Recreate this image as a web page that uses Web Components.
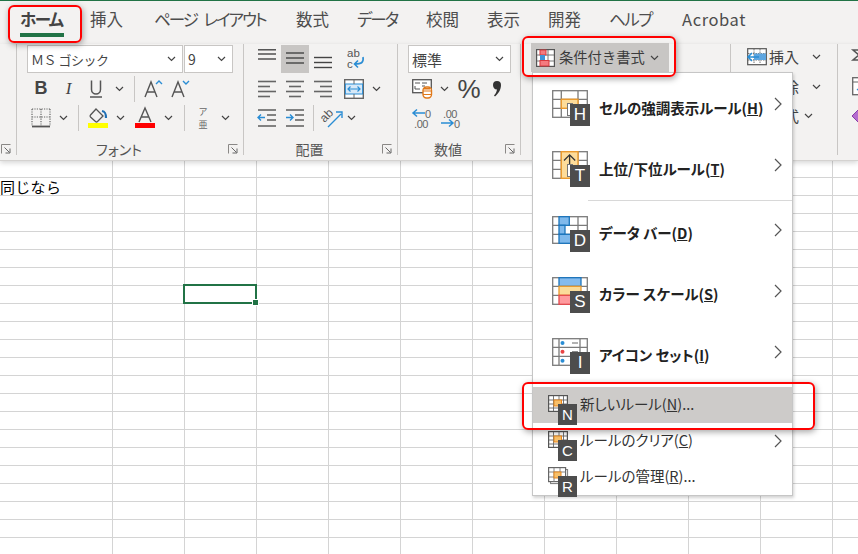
<!DOCTYPE html>
<html lang="ja"><head><meta charset="utf-8"><title>Excel</title>
<style>
html,body{margin:0;padding:0;width:858px;height:554px;overflow:hidden;background:#fff}
body{font-family:"Noto Sans CJK JP","Noto Sans",sans-serif;color:#444;position:relative}
</style></head><body>
<x-tabs>
  <x-tab w="70" active style="letter-spacing:-1.6px">ホーム</x-tab><x-tab w="64">挿入</x-tab><x-tab w="142" style="letter-spacing:-2px;word-spacing:5px">ページ レイアウト</x-tab><x-tab w="61">数式</x-tab><x-tab w="69" style="letter-spacing:-2px">データ</x-tab><x-tab w="61">校閲</x-tab><x-tab w="61">表示</x-tab><x-tab w="61">開発</x-tab><x-tab w="73" style="letter-spacing:-1.5px">ヘルプ</x-tab><x-tab w="80" style="letter-spacing:.6px">Acrobat</x-tab>
</x-tabs>
<x-ribbon>
  <x-group w="17" launcher></x-group>
  <x-group w="227" pad="10" label="フォント" launcher>
    <x-row><x-combo w="156" style="font-size:13px;letter-spacing:-.5px">ＭＳ ゴシック</x-combo><x-combo w="49" style="margin-left:1px">9</x-combo></x-row>
    <x-row>
      <x-tool w="28"><span style="font:700 18px 'Liberation Sans',sans-serif">B</span></x-tool>
      <x-tool w="27"><span style="font:italic 400 17px 'Liberation Serif',serif">I</span></x-tool>
      <x-tool w="28" icon="under"></x-tool><x-tool w="18" icon="chev"></x-tool><x-tool w="12" icon="sep"></x-tool>
      <x-tool w="26" icon="growA"></x-tool><x-tool w="28" icon="shrinkA"></x-tool>
    </x-row>
    <x-row>
      <x-tool w="28" icon="borders"></x-tool><x-tool w="16" icon="chev"></x-tool><x-tool w="14" icon="sep"></x-tool>
      <x-tool w="26" icon="fill"></x-tool><x-tool w="18" icon="chev"></x-tool>
      <x-tool w="32" icon="fontA"></x-tool><x-tool w="14" icon="chev"></x-tool><x-tool w="18" icon="sep"></x-tool>
      <x-tool w="20"><span style="display:flex;flex-direction:column;align-items:center;font-size:9px;line-height:13px;color:#666"><span>ア</span><span>亜</span></span></x-tool><x-tool w="24" icon="chev"></x-tool>
    </x-row>
  </x-group>
  <x-group w="154" pad="9" label="配置" launcher>
    <x-row><x-tool w="28" icon="vtop"></x-tool><x-tool w="28" icon="vmid" on></x-tool><x-tool w="28" icon="vbot"></x-tool><x-tool w="4"></x-tool><x-tool w="28" icon="wrap"></x-tool></x-row>
    <x-row><x-tool w="28" icon="hleft"></x-tool><x-tool w="28" icon="hmid"></x-tool><x-tool w="28" icon="hright"></x-tool><x-tool w="4"></x-tool><x-tool w="26" icon="merge"></x-tool><x-tool w="18" icon="chev"></x-tool></x-row>
    <x-row><x-tool w="28" icon="outdent"></x-tool><x-tool w="28" icon="indent"></x-tool><x-tool w="8" icon="sep"></x-tool><x-tool w="30" icon="orient"></x-tool><x-tool w="9" icon="chev"></x-tool></x-row>
  </x-group>
  <x-group w="123" pad="10" label="数値" launcher>
    <x-row><x-combo w="103" style="font-size:15px">標準</x-combo></x-row>
    <x-row><x-tool w="27" icon="money"></x-tool><x-tool w="18" icon="chev"></x-tool><x-tool w="32"><span style="font-size:26px;line-height:28px;color:#444;font-family:'Liberation Sans',sans-serif">%</span></x-tool><x-tool w="24" icon="comma"></x-tool></x-row>
    <x-row><x-tool w="28" icon="decUp"></x-tool><x-tool w="30" icon="decDown"></x-tool></x-row>
  </x-group>
  <x-group w="210" pad="10">
    <x-cf>条件付き書式</x-cf>
  </x-group>
  <x-group w="107" pad="14">
    <x-row style="margin-top:-2px"><x-tool w="24" icon="insert"></x-tool><x-tool w="30"><span style="font-size:15px;margin-top:-1px">挿入</span></x-tool><x-tool w="34" icon="chev"></x-tool></x-row>
    <x-row><x-tool w="24"></x-tool><x-tool w="30"><span style="font-size:15px;margin-top:-1px">削除</span></x-tool><x-tool w="34" icon="chev"></x-tool></x-row>
    <x-row><x-tool w="24"></x-tool><x-tool w="30"><span style="font-size:15px;margin-top:-1px">書式</span></x-tool><x-tool w="18" icon="chev"></x-tool></x-row>
  </x-group>
  <x-group w="30" pad="14" last>
    <x-row style="margin-top:-4px"><x-tool w="16" icon="sigma"></x-tool></x-row>
    <x-row style="margin-top:2px"><x-tool w="16" icon="fillDown"></x-tool></x-row>
    <x-row><x-tool w="16" icon="eraser"></x-tool></x-row>
  </x-group>
</x-ribbon>
<x-sheet></x-sheet>
<x-menu>
  <x-item big type="h" key="H" dy="-1">セルの強調表示ルール(<u>H</u>)</x-item>
  <x-item big type="t" key="T" after dy="1">上位/下位ルール(<u>T</u>)</x-item>
  <x-item big type="d" key="D" dy="-3">データ バー(<u>D</u>)</x-item>
  <x-item big type="s" key="S" dy="-3">カラー スケール(<u>S</u>)</x-item>
  <x-item big type="i" key="I" dy="-3">アイコン セット(<u>I</u>)</x-item>
  <x-item type="n" key="N" hover nochev dy="-3">新しいルール(<u>N</u>)...</x-item>
  <x-item type="c" key="C" dy="-3">ルールのクリア(<u>C</u>)</x-item>
  <x-item type="r" key="R" nochev dy="-3">ルールの管理(<u>R</u>)...</x-item>
</x-menu>
<x-mark style="left:8px;top:5px;width:74px;height:38px"></x-mark>
<x-mark style="left:522px;top:36px;width:154px;height:41px"></x-mark>
<x-mark style="left:522px;top:382px;width:293px;height:48px"></x-mark>
<script>
const ln=(a,s='#555',w=1.4)=>a.map(([x1,y,x2])=>`<path d="M${x1} ${y}H${x2}" stroke="${s}" stroke-width="${w}"/>`).join('');
const svg=(w,h,b)=>`<svg xmlns="http://www.w3.org/2000/svg" width="${w}" height="${h}" viewBox="0 0 ${w} ${h}" fill="none" style="display:block;overflow:visible">${b}</svg>`;
const blue='#2a8dd4';
const ICONS={
 chev:svg(9,6,`<path d="M1 1l3.5 3.5L8 1" stroke="#444" stroke-width="1.2"/>`),
 sep:svg(1,28,`<rect width="1" height="26" y="1" fill="#c8c6c4"/>`),
 under:svg(14,20,`<path d="M2.5 1.5v9a4.5 4.5 0 0 0 9 0v-9" stroke="#555" stroke-width="1.5"/><path d="M1 18h12" stroke="#555" stroke-width="1.5"/>`),
 growA:svg(20,20,`<path d="M2 18L8 3l6 15M4.5 13h7" stroke="#555" stroke-width="1.4"/><path d="M13 5l3-3 3 3" stroke="${blue}" stroke-width="1.4"/>`),
 shrinkA:svg(20,20,`<path d="M2 18L8 3l6 15M4.5 13h7" stroke="#555" stroke-width="1.4"/><path d="M13 2l3 3 3-3" stroke="${blue}" stroke-width="1.4"/>`),
 borders:svg(20,20,`<path d="M1 1h18M1 9h18M1 1v17M10 1v17M19 1v17" stroke="#666" stroke-width="1.2" stroke-dasharray="1.2 1.2"/><path d="M1 18.5h18" stroke="#555" stroke-width="1.8"/>`),
 fill:svg(20,22,`<path d="M8 2l7 7-5.5 5.5a1.5 1.5 0 0 1-2 0L2.5 10a1.5 1.5 0 0 1 0-2z" stroke="#555" stroke-width="1.3"/><path d="M14 4c3 .5 4 2 4 7" stroke="#1f6fb5" stroke-width="2.2"/><rect y="16" width="20" height="5" fill="#ffff00"/>`),
 fontA:svg(20,22,`<path d="M4 15L10 1l6 14M6 10h8" stroke="#555" stroke-width="1.4"/><rect y="16" width="20" height="5" fill="#ff0000"/>`),
 vtop:svg(20,20,ln([[1,.8,19],[1,5,19],[1,10,19]],'#444')),
 vmid:svg(20,20,ln([[1,4,19],[1,9,19],[1,14,19]],'#444')),
 vbot:svg(20,20,ln([[1,8.5,19],[1,13.5,19],[1,18.5,19]],'#444')),
 hleft:svg(20,20,ln([[1,2.5,19],[1,7.5,13],[1,12.5,19],[1,17.5,13]],'#666',1.6)),
 hmid:svg(20,20,ln([[1,2.5,19],[4,7.5,16],[1,12.5,19],[4,17.5,16]],'#666',1.6)),
 hright:svg(20,20,ln([[1,2.5,19],[7,7.5,19],[1,12.5,19],[7,17.5,19]],'#666',1.6)),
 outdent:svg(20,20,ln([[1,2,19],[10,7,19],[10,12,19],[1,18,19]],'#666',1.6)+`<path d="M1 9.5h7M4 6.5l-3 3 3 3" stroke="${blue}" stroke-width="1.4"/>`),
 indent:svg(20,20,ln([[1,2,19],[10,7,19],[10,12,19],[1,18,19]],'#666',1.6)+`<path d="M1 9.5h7M5 6.5l3 3-3 3" stroke="${blue}" stroke-width="1.4"/>`),
 wrap:svg(20,22,`<text x="2" y="9" font-family="Liberation Sans" font-size="11.5" fill="#555">ab</text><text x="2" y="19.5" font-family="Liberation Sans" font-size="11.5" fill="#555">c</text><path d="M18 9c1 6-2 7-8 7M13 12.5L9.5 16l3.5 3.5" stroke="${blue}" stroke-width="1.6"/>`),
 merge:svg(20,20,`<rect x=".7" y=".7" width="18.6" height="18.6" stroke="#666" stroke-width="1.4" fill="#fff"/><rect x="1.4" y="5" width="17.2" height="10" fill="#d7e9f8" stroke="${blue}"/><path d="M10 1v4M10 15v4" stroke="#666"/><path d="M4 10h12M6.5 7.5L4 10l2.5 2.5M13.5 7.5L16 10l-2.5 2.5" stroke="${blue}" stroke-width="1.2"/>`),
 orient:svg(22,20,`<text x="1" y="11" font-family="Liberation Sans" font-size="12" fill="#555" transform="rotate(-45 7 10)">ab</text><path d="M7 19L20 6M15 4h6v6" stroke="${blue}" stroke-width="1.4"/>`),
 money:svg(20,20,`<rect x=".7" y=".7" width="18.6" height="13" stroke="#555" stroke-width="1.3" fill="#fff"/><path d="M3 4h5M3 7v3h5M10 4h5M10 7h3" stroke="#555"/><rect x="11" y="8" width="8.5" height="11" rx="3.5" fill="#fff" stroke="#e0791a" stroke-width="1.4"/><path d="M11 12h8.5M11 15.5h8.5" stroke="#e0791a" stroke-width="1.2"/><path d="M12 9.7h6" stroke="#e0791a" stroke-width="1.6"/>`),
 comma:svg(10,18,`<path d="M1 5a4 4 0 1 1 8 0c0 5-3 9-6 11.5l-1-1c1.5-1.5 2.6-3.5 3-6C2.5 9.5 1 7.5 1 5z" fill="#333"/>`),
 decUp:svg(20,20,`<text x="13" y="9.5" font-family="Liberation Sans" font-size="11" fill="#666">0</text><text x="2" y="19.5" font-family="Liberation Sans" font-size="11" fill="#666" letter-spacing="-.4">.00</text><path d="M1 5h12M5 1.5L1 5l4 3.5" stroke="${blue}" stroke-width="1.5"/>`),
 decDown:svg(20,20,`<text x="2" y="9.5" font-family="Liberation Sans" font-size="11" fill="#666" letter-spacing="-.4">.00</text><text x="13" y="19.5" font-family="Liberation Sans" font-size="11" fill="#666">0</text><path d="M0 15h12M8 11.5l4 3.5-4 3.5" stroke="${blue}" stroke-width="1.5"/>`),
 insert:svg(20,18,`<rect x=".7" y=".7" width="18.6" height="16" stroke="#555" stroke-width="1.2" fill="#fff"/><path d="M7 1v16M13 1v16M1 5.5h18M1 12h18" stroke="#666" stroke-width=".9" stroke-dasharray="1.5 1"/><rect x="7" y="5.5" width="12" height="6.5" fill="#5ea6e0"/><path d="M1 9h11M5 5L1 9l4 4" stroke="${blue}" stroke-width="1.6"/>`),
 sigma:svg(16,12,`<path d="M14 1H1l6 5-6 5h13" stroke="#555" stroke-width="1.5"/>`),
 fillDown:svg(16,20,`<rect x=".7" y=".7" width="14" height="17" stroke="#666" stroke-width="1.3" fill="#fff"/><path d="M1 5h14" stroke="#666"/><path d="M7 8v6M5 12l2 2 2-2" stroke="${blue}" stroke-width="1.2"/>`),
 eraser:svg(16,14,`<path d="M0 7l6-6 6 6-6 6z" fill="#b46ccf" stroke="#8a3fa8"/>`)
};
const G='#7b7b7b';
const small=(extra)=>svg(20,17,`<rect x=".6" y=".6" width="18.8" height="15.8" fill="#fff" stroke="#555" stroke-width="1.2"/><path d="M5.5 1v15M11 1v15M15.5 1v15M1 5h18M1 9h18M1 13h18" stroke="#666" stroke-width=".9"/><rect x="6" y="5" width="7.5" height="6" fill="#f7c06b" stroke="#e8871e"/>${extra||''}`);
const bigOv=(o)=>svg(36,28,`<rect x=".7" y=".7" width="34.6" height="26.6" fill="#fff"/><g stroke="${G}" stroke-width="1.3"><rect x=".7" y=".7" width="34.6" height="26.6"/><path d="M9.3 1v26M26 1v26M1 9.3h34M1 18.3h34"/></g>${o}`);
const TYPES={
 n:small(),c:small(`<path d="M17 9l3 3-3 3-3-3z" fill="#b46ccf"/>`),
 r:svg(20,17,`<rect x="2.6" y="2.6" width="17" height="14" fill="#fff" stroke="#777"/><rect x=".6" y=".6" width="17" height="14" fill="#fff" stroke="#666" stroke-width="1.2"/><path d="M6 1v14M12 1v14M1 5h17M1 10h17" stroke="#777" stroke-width=".9"/><rect x="6" y="5" width="7" height="6" fill="#f7c06b" stroke="#e8871e"/>`),
 h:bigOv(`<rect x="9.3" y="9.3" width="16.7" height="9" fill="#fddc9a" stroke="#ea9a2e" stroke-width="1.4"/><rect x="15.5" y="13.5" width="5" height="12" fill="#fff" stroke="#777"/>`),
 t:bigOv(`<rect x="9.3" y=".7" width="16.7" height="26.6" fill="#fddc9a" stroke="#ea9a2e" stroke-width="1.4"/><path d="M17.6 24V4M12 9.5l5.6-5.6 5.6 5.6" stroke="#333" stroke-width="1.3"/><rect x="15.5" y="13.5" width="5" height="12" fill="#fff" stroke="#777"/>`),
 d:bigOv(`<rect x="7" y=".7" width="10.3" height="8.6" fill="#7fb9ec" stroke="#1c75bc" stroke-width="1.3"/><rect x="7" y="9.3" width="6" height="9" fill="#7fb9ec" stroke="#1c75bc" stroke-width="1.3"/><rect x="7" y="18.3" width="12" height="9" fill="#7fb9ec" stroke="#1c75bc" stroke-width="1.3"/>`),
 s:bigOv(`<rect x="7" y=".7" width="22" height="8.6" fill="#84bbee" stroke="#1c75bc" stroke-width="1.3"/><rect x="7" y="9.3" width="22" height="9" fill="#fbdc9a" stroke="#ea9a2e" stroke-width="1.3"/><rect x="7" y="18.3" width="22" height="9" fill="#ff9a9e" stroke="#e34a4e" stroke-width="1.3"/>`),
 i:svg(36,28,`<rect x=".7" y=".7" width="34.6" height="26.6" fill="#fff"/><g stroke="${G}" stroke-width="1.3"><rect x=".7" y=".7" width="34.6" height="26.6"/><path d="M7 1v26M28 1v26M1 9.3h34M1 18.3h34"/></g><circle cx="10.5" cy="5" r="2" fill="#2a8dd4"/><circle cx="10.5" cy="13.8" r="2" fill="#e84444"/><circle cx="10.5" cy="22.8" r="2" fill="#2a8dd4"/><path d="M20 5h6M20 13.8h6" stroke="#666" stroke-width="1.2"/>`)
};

function def(name,css,html,init){
  customElements.define(name,class extends HTMLElement{
    constructor(){super();this.attachShadow({mode:'open'}).innerHTML=`<style>${css}</style>${html}`;}
    connectedCallback(){init&&init.call(this,this.shadowRoot);}
  });
}
def('x-tabs',`:host{display:flex;height:44px;padding-left:20px;box-sizing:border-box;background:#f3f2f1;border-top:1.5px solid #217346}`,`<slot></slot>`);
def('x-tab',`:host{display:block;flex:none;position:relative;height:38px;font-size:16.5px;line-height:37px;color:#4d4d4d;white-space:nowrap;font-feature-settings:"palt"}
 :host([active]){font-weight:700;color:#444}
 i{display:none}:host([active]) i{display:block;position:absolute;left:0;top:31.5px;width:44px;height:4px;background:#217346}`,`<slot></slot><i></i>`,function(){this.style.width=this.getAttribute('w')+'px';});
def('x-ribbon',`:host{display:flex;position:relative;z-index:1;height:117px;box-sizing:border-box;padding-bottom:5px;background:#f3f2f1;border-bottom:1px solid #d4d2d0;box-shadow:0 2px 5px rgba(0,0,0,.16)}`,`<slot></slot>`);
def('x-group',`:host{display:flex;flex:none;flex-direction:column;box-sizing:border-box;border-right:1px solid #c8c6c4;position:relative}
 :host([last]){border-right:0}
 .body{display:flex;flex-direction:column;gap:1.5px;padding-top:1px;flex:1;min-height:0}
 .foot{display:flex;height:14px;margin-bottom:-1px;align-items:center}
 .label{flex:1;text-align:center;font-size:14px;line-height:14px;color:#555;font-feature-settings:"palt";white-space:nowrap}
 .lau{width:22px;display:none;justify-content:flex-end;padding-right:5px;box-sizing:border-box}
 :host([launcher]) .lau{display:flex}`,
 `<div class="body" part="body"><slot></slot></div><div class="foot"><div class="label"></div><div class="lau">${svg(10,10,`<path d="M.5 9.5V.5h9" stroke="#8a8886"/><path d="M3.5 3.5l5 5M4.5 9h4.5V4.5" stroke="#666"/>`)}</div></div>`,
 function(r){this.style.width=this.getAttribute('w')+'px';r.querySelector('.body').style.paddingLeft=(this.getAttribute('pad')||0)+'px';r.querySelector('.label').textContent=this.getAttribute('label')||'';});
def('x-row',`:host{display:flex;height:28px;align-items:center;flex:none}`,`<slot></slot>`);
def('x-tool',`:host{display:flex;flex:none;height:28px;align-items:center;justify-content:center;color:#444;white-space:nowrap}
 :host([on]){background:#c8c6c4}`,`<span id="i" style="display:contents"></span><slot></slot>`,
 function(r){this.style.width=this.getAttribute('w')+'px';const n=this.getAttribute('icon');if(n)r.getElementById('i').innerHTML=ICONS[n];});
def('x-combo',`:host{display:flex;flex:none;height:28px;box-sizing:border-box;background:#fff;border:1px solid #c8c6c4;align-items:center;padding:0 6px 0 3px;font-size:14px;color:#444;white-space:nowrap}
 .t{flex:1}`,`<span class="t"><slot></slot></span>${ICONS.chev}`,function(){this.style.width=this.getAttribute('w')+'px';});
def('x-cf',`:host{display:flex;height:29px;width:138px;margin-top:-2px;box-sizing:border-box;background:#c8c6c4;align-items:center;padding-left:5px;font-size:14.3px;color:#3c3c3c;white-space:nowrap}
 .t{margin:-3px 5px 0 4px}`,
 svg(19,18,`<rect x=".6" y=".6" width="17.8" height="16.8" fill="#fff" stroke="#555" stroke-width="1.2"/><path d="M6 1v16M12 1v16M1 6h17M1 12h17" stroke="#666" stroke-width=".9"/><rect x="4" y="1" width="6" height="5" fill="#f47b7f" stroke="#d8393d"/><rect x="4" y="6" width="5" height="5.5" fill="#3f94d8"/><rect x="4" y="11.5" width="9" height="5.5" fill="#f47b7f" stroke="#d8393d"/>`)+`<span class="t"><slot></slot></span>${ICONS.chev}`);
def('x-sheet',`:host{display:grid;grid-template-columns:113px repeat(11,72px);grid-template-rows:17px repeat(21,18px);height:393px;overflow:hidden;background:#fff}
 div{border-right:1px solid #d4d4d4;border-bottom:1px solid #d4d4d4;box-sizing:border-box;position:relative;font-size:15px;letter-spacing:.3px;line-height:17px;color:#000;white-space:nowrap}
 .sel{position:absolute;left:-2px;top:-2px;right:-1px;bottom:-1px;border:2px solid #217346;box-sizing:border-box}
 .h{position:absolute;right:-3px;bottom:-3px;width:5px;height:5px;background:#217346;outline:1px solid #fff}`,``,
 function(r){if(r.querySelector('div'))return;for(let y=0;y<22;y++)for(let x=0;x<12;x++){const d=document.createElement('div');
   if(y==1&&x==0){d.textContent='同じなら';}
   if(y==7&&x==2){const s=document.createElement('span');s.className='sel';const h=document.createElement('span');h.className='h';s.append(h);d.append(s);d.style.zIndex=1;}
   r.append(d);}});
def('x-menu',`:host{position:absolute;left:532px;top:72px;width:261px;height:424px;box-sizing:border-box;z-index:2;background:#fff;border:1px solid #c6c6c6;box-shadow:1px 2px 3px rgba(0,0,0,.18);padding-top:4px;display:flex;flex-direction:column}`,`<slot></slot>`);
def('x-item',`:host{display:flex;flex:none;height:36px;align-items:center;padding-left:15px;font-size:14.5px;color:#333;white-space:nowrap;font-feature-settings:"palt";box-sizing:border-box;padding-right:10px;position:relative}
 :host([hover]){background:#cdcbc9;margin-top:1px}
 :host([big]){height:61px;padding-left:19px;font-weight:700;color:#222;font-size:14.5px}
 :host([after]){height:60px;margin-bottom:5px;}
 .ic{position:relative;width:32px;height:20px;flex:none}
 :host([big]) .ic{width:47px;height:35px}
 .k{position:absolute;z-index:1;left:10px;top:9px;width:19px;height:21px;background:#4d4d4d;color:#fff;font:400 15px/21px "Liberation Sans",sans-serif;text-align:center}
 :host([big]) .k{left:18px;top:14px;width:20px;height:22px;line-height:22px;font-size:17px}
 .t{flex:1}
 :host([big]) .c{margin-top:-7px}
 :host([nochev]) .c{display:none}
 .sep{display:none}
 :host([after]) .sep{display:block;position:absolute;left:55px;right:0;bottom:-3px;height:1px;background:#d8d8d8}`,
 `<div class="ic"><span class="g"></span><span class="k"></span></div><span class="t"><slot></slot></span><span class="c">${svg(8,14,`<path d="M1 1l6 6-6 6" stroke="#555" stroke-width="1.2"/>`)}</span><span class="sep"></span>`,
 function(r){r.querySelector('.g').innerHTML=TYPES[this.getAttribute('type')];r.querySelector('.k').textContent=this.getAttribute('key');r.querySelector('.t').style.marginTop=(this.getAttribute('dy')||0)+'px';});
def('x-mark',`:host{position:absolute;display:block;box-sizing:border-box;border:2px solid #ff0000;border-radius:6px;z-index:3;box-shadow:1px 2px 6px rgba(0,0,0,.35)}`,``);
</script>
</body></html>
